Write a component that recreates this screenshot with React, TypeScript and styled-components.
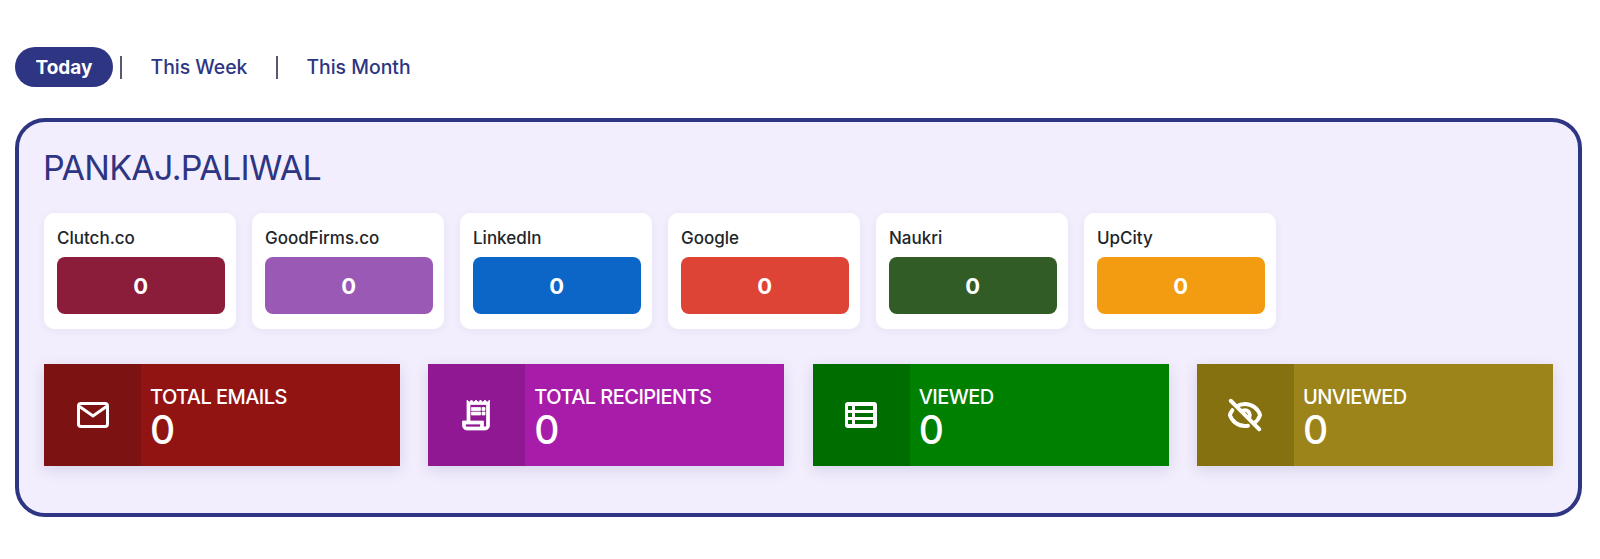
import React from 'react';
import styled, { createGlobalStyle } from 'styled-components';
import { MdOutlineReceiptLong } from 'react-icons/md';
import { HiOutlineEyeOff } from 'react-icons/hi';

const navy = '#2e3582';

const Styles = createGlobalStyle`
  html, body {
    margin: 0;
    background: #fff;
    font-family: Inter, "Noto Sans", sans-serif;
  }
`;

const Page = styled.div`
  padding: 47px 18px 42px 15px;
`;

const Tabs = styled.div`
  display: flex;
  align-items: center;
  height: 40px;
  margin-bottom: 31px;
`;

const Tab = styled.div<{ $active?: boolean }>`
  height: 40px;
  display: flex;
  align-items: center;
  padding: 0 ${(p) => (p.$active ? '20.5px' : '28.5px')};
  border-radius: 20px;
  font-size: ${(p) => (p.$active ? '19px' : '19.4px')};
  font-weight: ${(p) => (p.$active ? 700 : 550)};
  color: ${(p) => (p.$active ? '#fff' : navy)};
  background: ${(p) => (p.$active ? navy : 'transparent')};
`;

const Divider = styled.div<{ $first?: boolean }>`
  width: 2px;
  height: 23px;
  margin-left: ${(p) => (p.$first ? '7px' : '0')};
  background: #555a6c;
`;

const Panel = styled.div`
  box-sizing: border-box;
  height: 399px;
  border: 4px solid ${navy};
  border-radius: 30px;
  background: #f2eefd;
  padding: 23px 25px 0 25px;
`;

const Title = styled.div`
  font-size: 34px;
  line-height: 46px;
  font-weight: 400;
  color: ${navy};
  letter-spacing: -0.7px;
  margin: 0 0 22px -1px;
`;

const Sources = styled.div`
  display: flex;
  gap: 16px;
  margin-bottom: 35px;
`;

const SourceCard = styled.div`
  box-sizing: border-box;
  width: 192px;
  height: 116px;
  padding: 13px 11.5px 13px 13px;
  background: #fff;
  border-radius: 10px;
  box-shadow: 0 2px 8px rgba(60, 50, 140, 0.06);
`;

const SourceName = styled.div`
  font-size: 17px;
  line-height: 24px;
  font-weight: 550;
  color: #212529;
  margin-bottom: 7px;
`;

const SourceCount = styled.div<{ $color: string }>`
  height: 57px;
  display: flex;
  align-items: center;
  justify-content: center;
  border-radius: 8px;
  background: ${(p) => p.$color};
  color: #fff;
  font-size: 22px;
  font-weight: 700;
`;

const Stats = styled.div`
  display: grid;
  grid-template-columns: repeat(4, 356px);
  justify-content: space-between;
`;

const Stat = styled.div<{ $color: string }>`
  display: flex;
  height: 102px;
  background: ${(p) => p.$color};
  color: #fff;
  box-shadow: 0 4px 14px rgba(40, 30, 110, 0.13);
`;

const StatIcon = styled.div<{ $color: string }>`
  width: 97px;
  flex: none;
  display: flex;
  align-items: center;
  justify-content: center;
  padding-bottom: 1px;
  background: ${(p) => p.$color};
`;

const StatBody = styled.div`
  padding: 21px 9px 0;
`;

const StatLabel = styled.div`
  font-size: 20px;
  line-height: 24px;
  font-weight: 550;
  letter-spacing: -0.55px;
`;

const StatValue = styled.div`
  font-size: 39px;
  line-height: 41px;
  font-weight: 550;
`;

const ReceiptIcon = styled(MdOutlineReceiptLong)`
  margin-right: 2px;
  path:not([fill='none']) {
    stroke: currentColor;
    stroke-width: 0.5;
  }
`;

const EyeOffIcon = styled(HiOutlineEyeOff)`
  path {
    stroke-width: 2.5;
  }
`;

const MailIcon = () => (
  <svg width="32" height="26" viewBox="0 0 32 26" fill="none" stroke="#fff" strokeWidth="3">
    <rect x="1.5" y="1.5" width="29" height="23" rx="2.5" />
    <path d="M2.5 4.5 16 14 29.5 4.5" />
  </svg>
);

const TableIcon = () => (
  <svg width="32" height="26" viewBox="0 0 32 26">
    <path
      fill="#fff"
      fillRule="evenodd"
      d="M3 0h26a3 3 0 0 1 3 3v20a3 3 0 0 1-3 3H3a3 3 0 0 1-3-3V3a3 3 0 0 1 3-3zM3 4v4h4V4zM10 4v4h18V4zM3 11v4h4v-4zM10 11v4h18v-4zM3 18v4h4v-4zM10 18v4h18v-4z"
    />
  </svg>
);

const sources = [
  { name: 'Clutch.co', color: '#8b1c3a' },
  { name: 'GoodFirms.co', color: '#9b59b6' },
  { name: 'LinkedIn', color: '#0b66c8' },
  { name: 'Google', color: '#de4436' },
  { name: 'Naukri', color: '#325c25' },
  { name: 'UpCity', color: '#f39c12' },
];

const stats = [
  { label: 'TOTAL EMAILS', color: '#911413', dark: '#7c1211', icon: <MailIcon /> },
  { label: 'TOTAL RECIPIENTS', color: '#a81caa', dark: '#901893', icon: <ReceiptIcon size={36} /> },
  { label: 'VIEWED', color: '#008000', dark: '#006d00', icon: <TableIcon /> },
  { label: 'UNVIEWED', color: '#9c841b', dark: '#857110', icon: <EyeOffIcon size={38} /> },
];

function App() {
  return (
    <>
      <Styles />
      <Page>
        <Tabs>
          <Tab $active>Today</Tab>
          <Divider $first />
          <Tab>This Week</Tab>
          <Divider />
          <Tab>This Month</Tab>
        </Tabs>
        <Panel>
          <Title>PANKAJ.PALIWAL</Title>
          <Sources>
            {sources.map((s) => (
              <SourceCard key={s.name}>
                <SourceName>{s.name}</SourceName>
                <SourceCount $color={s.color}>0</SourceCount>
              </SourceCard>
            ))}
          </Sources>
          <Stats>
            {stats.map((s) => (
              <Stat key={s.label} $color={s.color}>
                <StatIcon $color={s.dark}>{s.icon}</StatIcon>
                <StatBody>
                  <StatLabel>{s.label}</StatLabel>
                  <StatValue>0</StatValue>
                </StatBody>
              </Stat>
            ))}
          </Stats>
        </Panel>
      </Page>
    </>
  );
}

export default App;
